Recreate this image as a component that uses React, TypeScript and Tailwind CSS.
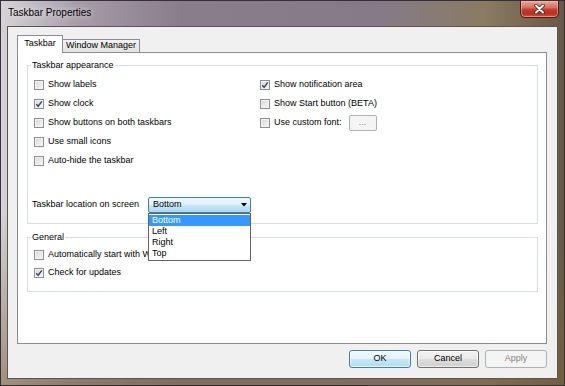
import React from "react";

interface CheckProps {
  label: string;
  checked?: boolean;
  rowHeight?: string;
}

function CheckBox({ label, checked = false, rowHeight = "h-[19px]" }: CheckProps) {
  return (
    <div className={`flex items-center ${rowHeight}`}>
      <span className="flex h-[10px] w-[10px] shrink-0 items-center justify-center border border-[#8e8f8f] bg-[linear-gradient(135deg,#d6d6d6,#f8f8f8)] shadow-[inset_0_0_0_1px_#f3f3f3]">
        {checked && (
          <svg width="8" height="8" viewBox="0 0 8 8">
            <path d="M1.2 4.1 L3.1 6.3 L6.9 1.4" fill="none" stroke="#3a4560" strokeWidth="1.4" />
          </svg>
        )}
      </span>
      <span className="ml-[4px] whitespace-nowrap">{label}</span>
    </div>
  );
}

function GroupLabel({ text }: { text: string }) {
  return (
    <div className="-mt-[6px] ml-[3px] w-fit bg-white px-[1px] leading-[11px]">{text}</div>
  );
}

const locations = ["Bottom", "Left", "Right", "Top"];

export default function App() {
  return (
    <div className="flex h-[386px] w-[565px] flex-col overflow-hidden border border-[#34303a] bg-[image:linear-gradient(180deg,rgba(0,0,0,0)_55%,rgba(125,98,62,0.6)_100%),linear-gradient(90deg,#d6d3d8_0%,#a59ca8_14%,#877d8b_32%,#857b88_68%,#8a7b62_86%,#665845_100%)] font-['Liberation_Sans',Arial,sans-serif] text-[9px] text-black">
      {/* title bar */}
      <div className="flex h-[25px] shrink-0 items-start justify-between pl-[7px]">
        <span className="mt-[6px] text-[10px] leading-[12px] [text-shadow:0_0_6px_#ffffff]">
          Taskbar Properties
        </span>
        <div className="-mt-[1px] mr-[5px] flex h-[18px] w-[39px] items-center justify-center rounded-b-[5px] border border-[#4a1c16] bg-[linear-gradient(180deg,#eaa99c_0%,#d9705f_40%,#c4382a_55%,#b8301f_80%,#d9583c_100%)] shadow-[inset_0_0_0_1px_rgba(255,200,190,0.5)]">
          <svg width="11" height="10" viewBox="0 0 11 10">
            <path d="M2 1.5 L9 8.5 M9 1.5 L2 8.5" stroke="#3a2522" strokeWidth="3.6" strokeLinecap="round" />
            <path d="M2 1.5 L9 8.5 M9 1.5 L2 8.5" stroke="#ffffff" strokeWidth="2" strokeLinecap="round" />
          </svg>
        </div>
      </div>

      {/* client area */}
      <div className="mx-[6px] mb-[6px] flex flex-1 flex-col border border-[#5b5550] bg-[#f0f0f0]">
        {/* tabs */}
        <div className="ml-[9px] mt-[8px] flex h-[17px] items-end">
          <div className="relative z-10 -mb-[1px] flex h-[18px] w-[46px] items-center justify-center border-x border-t border-[#898c95] bg-white pb-[1px]">
            Taskbar
          </div>
          <div className="flex h-[13px] w-[77px] items-center justify-center border-r border-t border-[#898c95] bg-[linear-gradient(180deg,#f2f2f2,#e3e3e3)]">
            Window Manager
          </div>
        </div>

        {/* tab panel */}
        <div className="ml-[9px] mr-[10px] flex flex-1 flex-col border border-[#898c95] bg-white">
          {/* Taskbar appearance */}
          <div className="ml-[9px] mr-[8px] mt-[12px] border border-[#d5dfe5] pb-[10px]">
            <GroupLabel text="Taskbar appearance" />
            <div className="mt-[4px] flex pl-[6px]">
              <div className="w-[226px]">
                <CheckBox label="Show labels" />
                <CheckBox label="Show clock" checked />
                <CheckBox label="Show buttons on both taskbars" />
                <CheckBox label="Use small icons" />
                <CheckBox label="Auto-hide the taskbar" />
              </div>
              <div>
                <CheckBox label="Show notification area" checked />
                <CheckBox label="Show Start button (BETA)" />
                <div className="flex h-[19px] items-center">
                  <CheckBox label="Use custom font:" />
                  <div className="ml-[7px] flex h-[16px] w-[28px] items-center justify-center rounded-[2px] border border-[#adb2b5] bg-[#f4f4f4] text-[#838383]">
                    ...
                  </div>
                </div>
              </div>
            </div>

            <div className="mt-[27px] flex items-center pl-[4px]">
              <span className="w-[116px] whitespace-nowrap">Taskbar location on screen</span>
              <div className="relative">
                <div className="flex h-[16px] w-[103px] items-center justify-between rounded-[2px] border border-[#3c7fb1] bg-[linear-gradient(180deg,#eef8fd_0%,#ddf1fb_50%,#c5e6f7_52%,#acd9f1_100%)] pl-[4px] pr-[3px]">
                  <span>Bottom</span>
                  <svg width="6" height="4" viewBox="0 0 6 4">
                    <path d="M0 0 H6 L3 3.5 Z" fill="#000000" />
                  </svg>
                </div>
                <div className="absolute left-0 top-full z-20 w-[103px] border border-[#646464] bg-white py-[1px]">
                  {locations.map((loc, i) => (
                    <div
                      key={loc}
                      className={`h-[11px] px-[3px] leading-[11px] ${i === 0 ? "bg-[#3399ff] text-white" : ""}`}
                    >
                      {loc}
                    </div>
                  ))}
                </div>
              </div>
            </div>
          </div>

          {/* General */}
          <div className="ml-[9px] mr-[8px] mt-[13px] border border-[#d5dfe5] pb-[9px]">
            <GroupLabel text="General" />
            <div className="mt-[3px] pl-[6px]">
              <CheckBox label="Automatically start with Windows" rowHeight="h-[18px]" />
              <CheckBox label="Check for updates" checked rowHeight="h-[18px]" />
            </div>
          </div>
        </div>

        {/* dialog buttons */}
        <div className="mr-[10px] flex justify-end gap-[6px] pb-[10px] pt-[6px]">
          <div className="flex h-[18px] w-[62px] items-center justify-center rounded-[3px] border border-[#3c7fb1] bg-[linear-gradient(180deg,#f4fafd_0%,#e2f3fb_48%,#c6e7f7_52%,#afdcf3_100%)] shadow-[inset_0_0_0_1px_rgba(255,255,255,0.7)]">
            OK
          </div>
          <div className="flex h-[18px] w-[62px] items-center justify-center rounded-[3px] border border-[#707070] bg-[linear-gradient(180deg,#f2f2f2_0%,#ebebeb_48%,#dddddd_52%,#cfcfcf_100%)] shadow-[inset_0_0_0_1px_rgba(255,255,255,0.6)]">
            Cancel
          </div>
          <div className="flex h-[18px] w-[62px] items-center justify-center rounded-[3px] border border-[#adb2b5] bg-[#f4f4f4] text-[#838383]">
            Apply
          </div>
        </div>
      </div>
    </div>
  );
}
